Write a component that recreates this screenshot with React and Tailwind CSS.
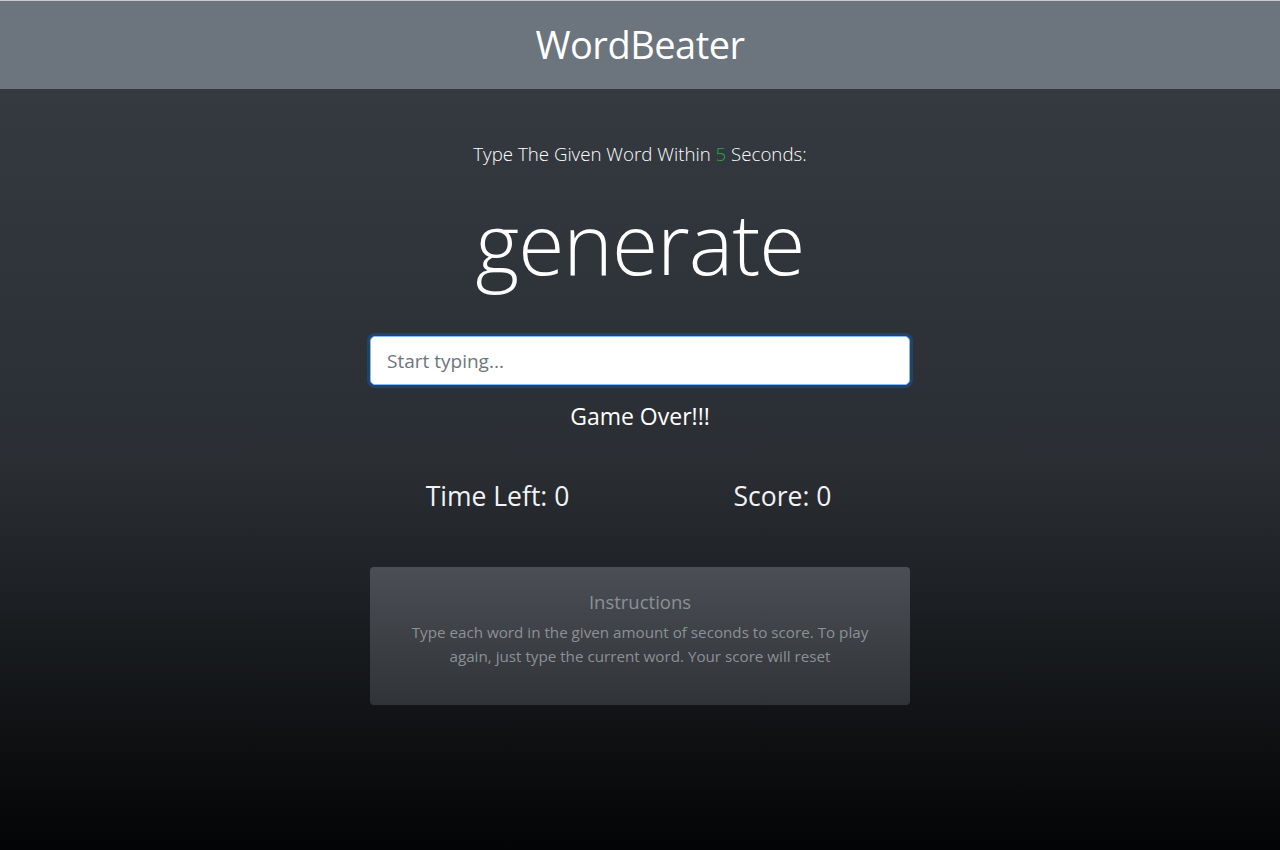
export default function App() {
  return (
    <div className="min-h-[850px] flex flex-col font-['Open_Sans',sans-serif] bg-[linear-gradient(to_bottom,#343a40_10%,#2a2e33_55%,#030405_100%)]">
      <header className="h-[89px] bg-[#6c757d] border-t border-[#c8cbcf] flex items-center justify-center">
        <h1 className="text-[38px] text-white font-normal tracking-[-0.5px] -mt-[2px]">WordBeater</h1>
      </header>
      <main className="w-[540px] mx-auto flex flex-col items-center text-white">
        <p className="mt-[51px] text-[18.7px] font-light leading-[28px]">
          Type The Given Word Within <span className="text-[#28a745]">5</span> Seconds:
        </p>
        <h2 className="mt-[20px] text-[84px] font-light leading-[110px] tracking-[-1px]">generate</h2>
        <input
          autoFocus
          type="text"
          placeholder="Start typing..."
          className="mt-[38px] w-full h-[49px] rounded-[5px] bg-white border border-[#80bdff] px-4 text-[19px] text-[#495057] placeholder:text-[#6c757d] outline-none shadow-[0_0_0_3px_rgba(0,123,255,0.25)]"
        />
        <h5 className="mt-[17px] text-[23px] leading-[28px]">Game Over!!!</h5>
        <div className="mt-[48px] w-[570px] grid grid-cols-2 text-[26.5px] leading-[36px] text-[#f1f3f5]">
          <div className="text-center">Time Left: 0</div>
          <div className="text-center">Score: 0</div>
        </div>
        <div className="mt-[53px] w-full h-[138px] rounded-[4px] bg-[linear-gradient(to_bottom,#4b4f55,#303337)] flex flex-col items-center pt-[22px] text-[#8c9196]">
          <h5 className="text-[18.5px] leading-[26px]">Instructions</h5>
          <p className="mt-[5px] px-9 text-center text-[15.2px] leading-[24px]">
            Type each word in the given amount of seconds to score. To play again, just type the current word. Your score will reset
          </p>
        </div>
      </main>
    </div>
  );
}
